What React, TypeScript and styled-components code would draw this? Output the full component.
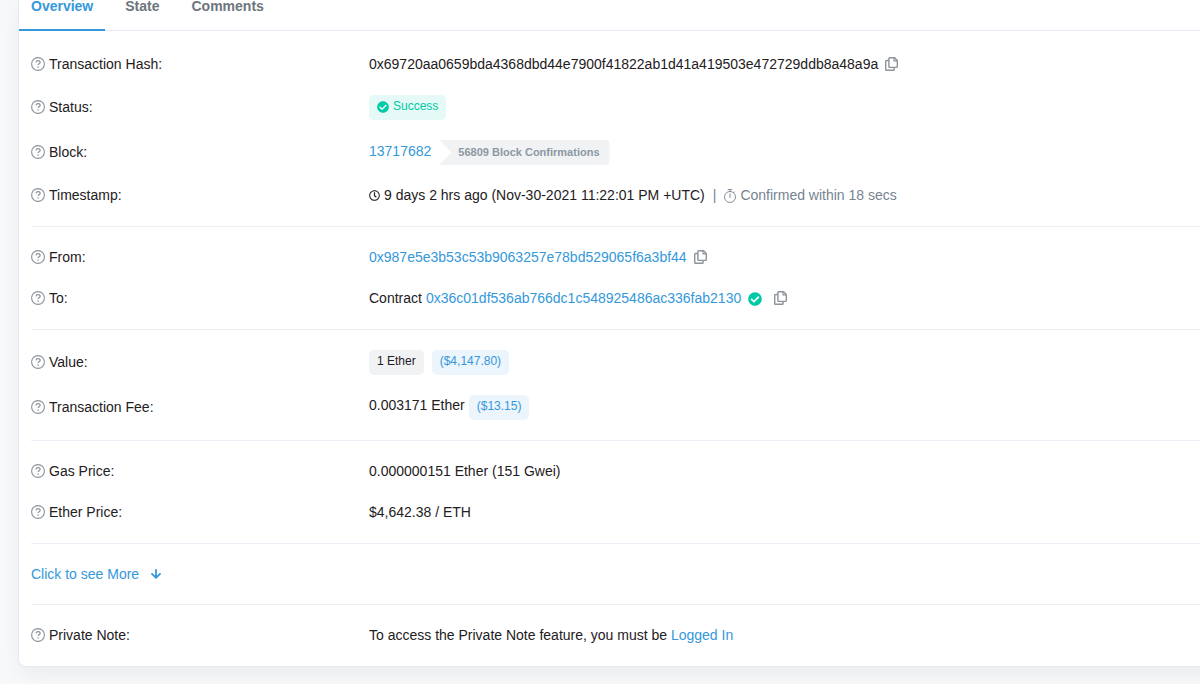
import React from "react";
import styled, { createGlobalStyle } from "styled-components";
import { FaCheckCircle, FaRegClock } from "react-icons/fa";

const GlobalStyle = createGlobalStyle`
  *, *::before, *::after { box-sizing: border-box; }
  body {
    margin: 0;
    background: #f8f9fa;
    color: #1e2022;
    font-family: "Liberation Sans", Arial, sans-serif;
    font-size: 14px;
    line-height: 21px;
  }
`;

const Page = styled.main`
  padding: 0 0 18px 18px;
  overflow: hidden;
`;

const Card = styled.section`
  margin-right: -24px;
  background: #fff;
  border: solid #e7eaf3;
  border-width: 0 0 1px 1px;
  border-bottom-left-radius: 8px;
  box-shadow: 0 8px 19px rgba(140, 152, 164, 0.13);
`;

const Tabs = styled.nav`
  display: flex;
  gap: 8px;
  border-bottom: 1px solid #e7eaf3;
`;

const Tab = styled.button<{ $active?: boolean }>`
  height: 31px;
  margin: 0 0 -1px;
  padding: 0 12px 18px;
  border: 0;
  border-bottom: 2px solid ${(p) => (p.$active ? "#3498db" : "transparent")};
  background: none;
  color: ${(p) => (p.$active ? "#3498db" : "#6c757e")};
  font: bold 14px/12px "Liberation Sans", Arial, sans-serif;
  cursor: pointer;
`;

const Body = styled.div`
  padding: 3px 0 0 12px;
`;

const Group = styled.div`
  padding: 10px 0;
  & + & {
    border-top: 1px solid #edeff6;
  }
`;

const List = styled.dl`
  margin: 0;
`;

const Row = styled.div<{ $tall?: boolean }>`
  display: grid;
  grid-template-columns: 338px 1fr;
  align-items: center;
  min-height: ${(p) => (p.$tall ? 45 : 41)}px;
`;

const Label = styled.dt`
  display: flex;
  align-items: center;
  gap: 4px;

  svg {
    margin-bottom: 2px;
  }
`;

const Value = styled.dd<{ $center?: boolean }>`
  display: flex;
  align-items: ${(p) => (p.$center ? "center" : "baseline")};
  margin: 0;
  white-space: nowrap;
`;

const Inline = styled.span<{ $gap: number; $muted?: boolean }>`
  display: flex;
  align-items: center;
  gap: ${(p) => p.$gap}px;
  color: ${(p) => (p.$muted ? "#77838f" : "inherit")};
`;

const Link = styled.a`
  color: #3498db;
  text-decoration: none;
`;

const Badge = styled.span<{ $tone: "success" | "neutral" | "info"; $gap?: number }>`
  display: inline-flex;
  align-items: center;
  gap: 4px;
  margin-left: ${(p) => p.$gap ?? 0}px;
  padding: 4px 8px 6px;
  border-radius: 5px;
  font-size: 12px;
  line-height: 15px;
  color: ${(p) => ({ success: "#00c9a7", neutral: "#1e2022", info: "#3498db" })[p.$tone]};
  background: ${(p) => ({ success: "#e5f9f6", neutral: "#f1f2f4", info: "#ebf5fb" })[p.$tone]};
`;

const Confirmations = styled.span`
  margin-left: 8px;
  padding: 5px 10px 5px 19px;
  border-radius: 0 5px 5px 0;
  background: #f1f2f4;
  clip-path: polygon(0 0, 100% 0, 100% 100%, 0 100%, 12px 50%);
  color: #8c98a4;
  font-size: 11px;
  font-weight: bold;
  line-height: 15px;
`;

const Divider = styled.span`
  margin: 0 8px;
  color: #77838f;
`;

const CopyButton = styled.button`
  display: flex;
  margin: 0;
  padding: 0 0 1px;
  border: 0;
  background: none;
  color: #8c939b;
  cursor: pointer;
`;

const More = styled.a`
  display: flex;
  align-items: center;
  gap: 12px;
  min-height: 40px;
  color: #3498db;
  text-decoration: none;
`;

const HelpIcon = () => (
  <svg width="14" height="14" viewBox="0 0 14 14" fill="none" stroke="#8c939b" aria-hidden="true">
    <circle cx="7" cy="7" r="6.4" strokeWidth="1.1" />
    <path d="M5 5.4C5.1 4.2 5.9 3.6 7 3.6s2.1.7 2.1 1.8c0 1.4-2 1.4-2 2.7" strokeWidth="1.2" />
    <circle cx="7.1" cy="10" r=".8" fill="#8c939b" stroke="none" />
  </svg>
);

const StopwatchIcon = () => (
  <svg width="12" height="14" viewBox="0 0 12 14" fill="none" stroke="#77838f" aria-hidden="true">
    <circle cx="6" cy="8" r="5.5" strokeWidth=".9" />
    <path d="M4.2.6h3.6M6 .6v1.9M6 5v3.6M9.6 3.7l.9-.9" strokeWidth=".9" strokeLinecap="round" />
  </svg>
);

const ArrowDownIcon = () => (
  <svg width="10" height="10" viewBox="0 0 10 10" fill="none" stroke="currentColor" aria-hidden="true">
    <path d="M5 .9v7.6M1 4.8l4 4 4-4" strokeWidth="1.8" strokeLinecap="round" strokeLinejoin="round" />
  </svg>
);

const CopyIcon = () => (
  <svg width="13" height="14" viewBox="0 0 13 14" fill="none" stroke="currentColor" strokeWidth="1.4" strokeLinejoin="round" aria-hidden="true">
    <path d="M4.7.7h4.9l2.7 2.7v6.2a.8.8 0 0 1-.8.8H4.7a.8.8 0 0 1-.8-.8V1.5a.8.8 0 0 1 .8-.8z" />
    <path d="M9 .9v2.9h3.1" strokeWidth="1.2" />
    <path d="M3.9 3.5H1.5a.8.8 0 0 0-.8.8v8.2a.8.8 0 0 0 .8.8h6.8a.8.8 0 0 0 .8-.8v-2.1" />
  </svg>
);

const Copy = () => (
  <CopyButton aria-label="Copy to clipboard">
    <CopyIcon />
  </CopyButton>
);

type FieldProps = { label: string; tall?: boolean; center?: boolean; children: React.ReactNode };

const Field = ({ label, tall, center, children }: FieldProps) => (
  <Row $tall={tall}>
    <Label>
      <HelpIcon />
      {label}:
    </Label>
    <Value $center={center}>{children}</Value>
  </Row>
);

export default function App() {
  return (
    <Page>
      <GlobalStyle />
      <Card>
        <Tabs>
          <Tab $active>Overview</Tab>
          <Tab>State</Tab>
          <Tab>Comments</Tab>
        </Tabs>
        <Body>
          <Group as={List}>
            <Field label="Transaction Hash" center>
              <Inline $gap={7}>
                0x69720aa0659bda4368dbd44e7900f41822ab1d41a419503e472729ddb8a48a9a
                <Copy />
              </Inline>
            </Field>
            <Field label="Status" tall>
              <Badge $tone="success">
                <FaCheckCircle size={12} />
                Success
              </Badge>
            </Field>
            <Field label="Block" tall>
              <Link href="#block">13717682</Link>
              <Confirmations>56809 Block Confirmations</Confirmations>
            </Field>
            <Field label="Timestamp" center>
              <Inline $gap={4}>
                <FaRegClock size={11} />
                9 days 2 hrs ago (Nov-30-2021 11:22:01 PM +UTC)
              </Inline>
              <Divider>|</Divider>
              <Inline $gap={4} $muted>
                <StopwatchIcon />
                Confirmed within 18 secs
              </Inline>
            </Field>
          </Group>
          <Group as={List}>
            <Field label="From" center>
              <Inline $gap={7}>
                <Link href="#from">0x987e5e3b53c53b9063257e78bd529065f6a3bf44</Link>
                <Copy />
              </Inline>
            </Field>
            <Field label="To" center>
              <Inline $gap={12}>
                <Inline $gap={7}>
                  <Inline $gap={4}>
                    Contract
                    <Link href="#to">0x36c01df536ab766dc1c548925486ac336fab2130</Link>
                  </Inline>
                  <FaCheckCircle size={14} color="#00c9a7" />
                </Inline>
                <Copy />
              </Inline>
            </Field>
          </Group>
          <Group as={List}>
            <Field label="Value" tall>
              <Badge $tone="neutral">1 Ether</Badge>
              <Badge $tone="info" $gap={8}>($4,147.80)</Badge>
            </Field>
            <Field label="Transaction Fee" tall>
              0.003171 Ether
              <Badge $tone="info" $gap={4}>($13.15)</Badge>
            </Field>
          </Group>
          <Group as={List}>
            <Field label="Gas Price">0.000000151 Ether (151 Gwei)</Field>
            <Field label="Ether Price">$4,642.38 / ETH</Field>
          </Group>
          <Group>
            <More href="#more">
              Click to see More
              <ArrowDownIcon />
            </More>
          </Group>
          <Group as={List}>
            <Field label="Private Note">
              <span>
                To access the Private Note feature, you must be <Link href="#login">Logged In</Link>
              </span>
            </Field>
          </Group>
        </Body>
      </Card>
    </Page>
  );
}
